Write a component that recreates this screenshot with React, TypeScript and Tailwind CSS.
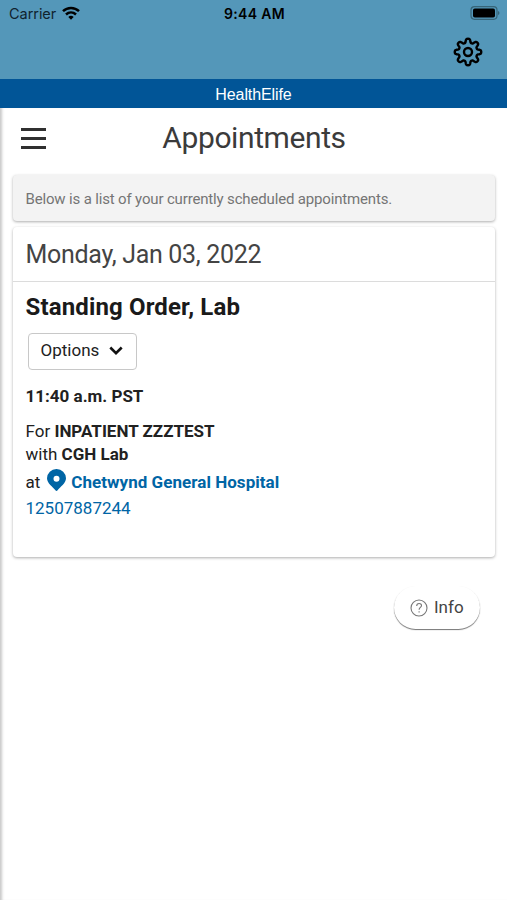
import React from "react";

// Eight-toothed cog outline
const cogPoints = Array.from({ length: 160 }, (_, i) => {
  const angle = (i / 160) * Math.PI * 2;
  const radius = 11.3 + 2 * Math.tanh(1.8 * Math.cos(angle * 8) + 0.1);
  return `${(15 + radius * Math.cos(angle)).toFixed(2)},${(15 + radius * Math.sin(angle)).toFixed(2)}`;
}).join(" ");

const StatusBar = () => {
  return (
    <div className="grid h-7 grid-cols-3 items-center pl-[9px] pr-[7px] text-black">
      <div className="flex items-center gap-[6px]">
        <span className="text-[14.5px] tracking-[-0.05px] text-[#10232e]">Carrier</span>
        <svg width="18" height="14" viewBox="0 0 18 14" fill="none" stroke="#000" strokeWidth="2.5" className="-mt-[2px]">
          <path d="M1 5.2C5.5 .9 12.5 .9 17 5.2" />
          <path d="M4 8.5c2.9-2.7 7.1-2.7 10 0" />
          <path d="M9 13.8l-2.7-2.9c1.6-1.4 3.8-1.4 5.4 0z" fill="#000" stroke="none" />
        </svg>
      </div>
      <span className="-mt-px text-center text-[14px] font-semibold tracking-[0.3px]">9:44 AM</span>
      <svg width="30" height="14" viewBox="0 0 30 14" className="-mt-[2px] justify-self-end">
        <rect x="1" y=".7" width="26" height="12.6" rx="3.5" fill="none" stroke="#376579" strokeWidth="1.2" />
        <rect x="3" y="2.5" width="22" height="9" rx="1.8" />
        <path d="M28 5c2 .8 2 3.2 0 4z" fill="#376579" />
      </svg>
    </div>
  );
};

const Header = () => {
  return (
    <header className="font-['Inter',sans-serif]">
      <div className="h-[79px] bg-[#5497b9]">
        <StatusBar />
        <div className="flex justify-end pr-6 pt-[9px]">
          <button aria-label="Settings">
            <svg width="30" height="30" viewBox="0 0 30 30" fill="none" stroke="#000" strokeWidth="2.4" strokeLinejoin="round">
              <polygon points={cogPoints} />
              <circle cx="15" cy="15" r="4" />
            </svg>
          </button>
        </div>
      </div>
      <div className="flex h-[29px] items-center justify-center bg-[#015597] pt-[2px] font-['Liberation_Sans',sans-serif] text-[16px] tracking-[-0.1px] text-white">
        HealthElife
      </div>
    </header>
  );
};

const AppointmentCard = () => {
  return (
    <section className="mt-[6px] h-[330px] rounded bg-white text-[#212121] shadow-[0_1px_3px_rgba(0,0,0,0.32)]">
      <h2 className="h-[55px] border-b border-[#dcdcdc] pl-[12.5px] text-[25px] leading-[55px] tracking-[-0.3px] text-[#444]">
        Monday, Jan 03, 2022
      </h2>
      <div className="pl-[12.5px]">
        <h3 className="pt-[9px] text-[24px] font-bold leading-[32px] tracking-[0.14px] text-[#1a1a1a]">Standing Order, Lab</h3>
        <button className="ml-[2px] mt-[10px] flex h-[37px] w-[109px] items-center gap-[10px] rounded border border-[#c8c8c8] pb-px pl-[12px] text-[17px]">
          Options
          <svg width="14" height="10" viewBox="0 0 14 10" fill="none" stroke="#111" strokeWidth="2.6">
            <path d="M1.3 1.5L7 7.2l5.7-5.7" />
          </svg>
        </button>
        <p className="mt-[14px] text-[17px] font-bold leading-6">11:40 a.m. PST</p>
        <div className="mt-[12px] text-[17px] leading-[23px]">
          <p>For <b>INPATIENT ZZZTEST</b></p>
          <p>with <b>CGH Lab</b></p>
          <p className="flex h-[31px] items-center pt-[2px]">
            at
            <svg width="19" height="22" viewBox="0 0 19 22" className="-mt-[5px] ml-[7px] mr-[5px]">
              <path fill="#0065a5" fillRule="evenodd" d="M9.5 0A9.4 9.4 0 0 0 0 9.3C0 14.5 6 17.8 8.4 21.3q1.1 1.2 2.2 0C13 17.8 19 14.5 19 9.3A9.4 9.4 0 0 0 9.5 0zm0 6.7a3 3 0 1 1 0 6 3 3 0 0 1 0-6z" />
            </svg>
            <a className="font-bold tracking-[0.04px] text-[#0065a5]">Chetwynd General Hospital</a>
          </p>
          <a className="text-[#0065a5]">12507887244</a>
        </div>
      </div>
    </section>
  );
};

export default function App() {
  return (
    <div className="flex h-[900px] w-full flex-col overflow-hidden bg-white font-['Roboto',sans-serif]">
      <Header />
      <main className="flex-1 pl-[13px] pr-[12px] shadow-[inset_4px_0_3px_-2px_rgba(0,0,0,0.22)]">
        <div className="grid h-[67px] grid-cols-[40px_1fr_40px] items-start pt-[10px] text-[#3b3b3b]">
          <button aria-label="Menu" className="mt-[10px] flex w-[25px] flex-col gap-[6px] justify-self-center">
            <span className="h-[3px] w-full bg-[#303030]" />
            <span className="h-[3px] w-full bg-[#303030]" />
            <span className="h-[3px] w-full bg-[#303030]" />
          </button>
          <h1 className="text-center text-[30px] leading-[40px] tracking-[-0.4px]">Appointments</h1>
        </div>
        <div className="h-[46px] rounded bg-[#f3f3f3] pl-[12.5px] text-[15px] leading-[48px] tracking-[-0.16px] text-[#757575] shadow-[0_1px_3px_rgba(0,0,0,0.32)]">
          Below is a list of your currently scheduled appointments.
        </div>
        <AppointmentCard />
        <div className="mt-[29px] flex justify-end pr-[15px]">
          <button className="flex h-[43px] w-[86px] items-center gap-[6px] rounded-full bg-white pl-[16px] pt-px text-[17px] text-[#444] shadow-[0_1px_1px_rgba(0,0,0,0.55)]">
            <svg width="18" height="18" viewBox="0 0 18 18" fill="none" stroke="#777" strokeWidth="1.1">
              <circle cx="9" cy="9" r="8" />
              <path d="M6.7 7c0-3.3 4.8-3.2 4.8-.5 0 1.9-2.4 2-2.4 4.2M9.1 12.2v1.3" />
            </svg>
            Info
          </button>
        </div>
      </main>
    </div>
  );
}
